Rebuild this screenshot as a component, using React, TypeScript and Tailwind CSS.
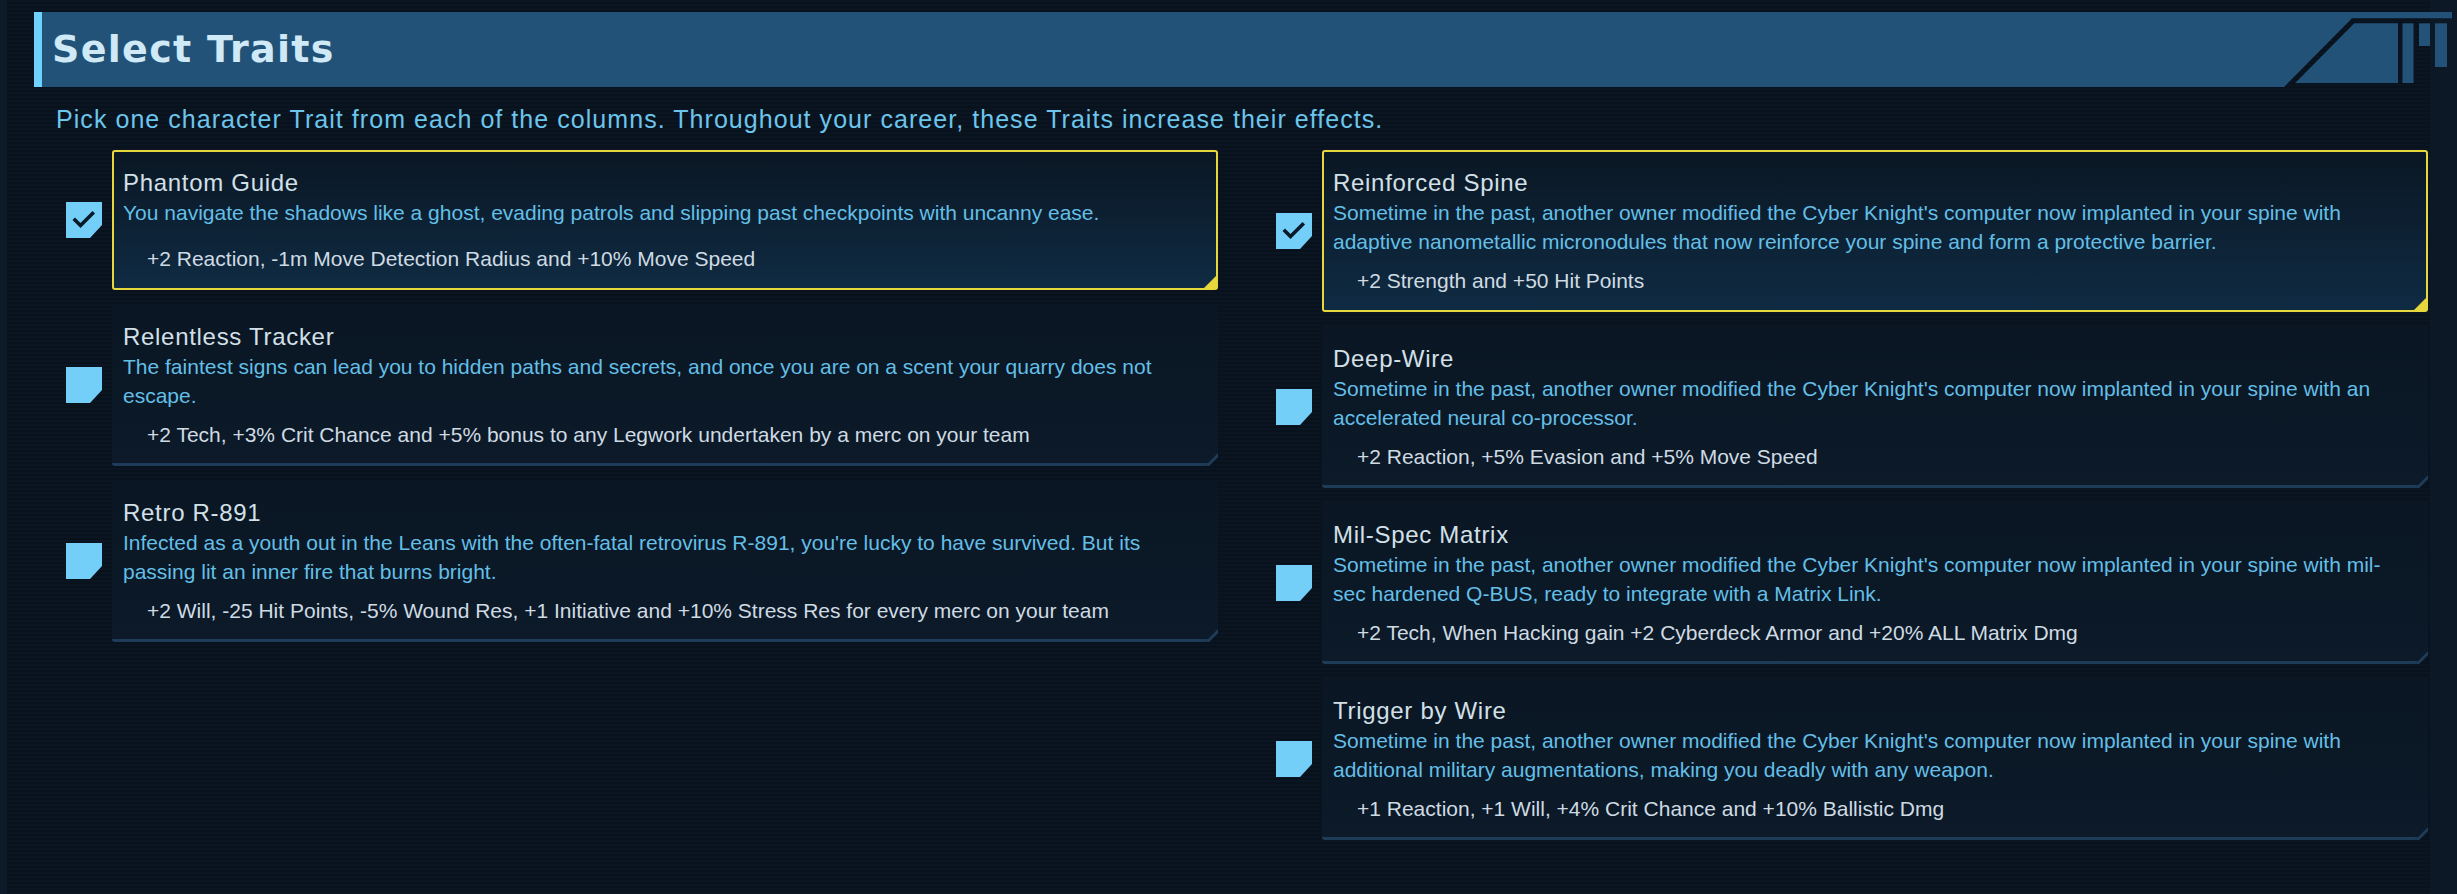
import React from "react";

type Trait = { name: string; desc: string[]; effect: string; selected?: boolean };

const leftTraits: Trait[] = [
  {
    name: "Phantom Guide",
    desc: ["You navigate the shadows like a ghost, evading patrols and slipping past checkpoints with uncanny ease."],
    effect: "+2 Reaction, -1m Move Detection Radius and +10% Move Speed",
    selected: true,
  },
  {
    name: "Relentless Tracker",
    desc: [
      "The faintest signs can lead you to hidden paths and secrets, and once you are on a scent your quarry does not",
      "escape.",
    ],
    effect: "+2 Tech, +3% Crit Chance and +5% bonus to any Legwork undertaken by a merc on your team",
  },
  {
    name: "Retro R-891",
    desc: [
      "Infected as a youth out in the Leans with the often-fatal retrovirus R-891, you're lucky to have survived. But its",
      "passing lit an inner fire that burns bright.",
    ],
    effect: "+2 Will, -25 Hit Points, -5% Wound Res, +1 Initiative and +10% Stress Res for every merc on your team",
  },
];

const rightTraits: Trait[] = [
  {
    name: "Reinforced Spine",
    desc: [
      "Sometime in the past, another owner modified the Cyber Knight's computer now implanted in your spine with",
      "adaptive nanometallic micronodules that now reinforce your spine and form a protective barrier.",
    ],
    effect: "+2 Strength and +50 Hit Points",
    selected: true,
  },
  {
    name: "Deep-Wire",
    desc: [
      "Sometime in the past, another owner modified the Cyber Knight's computer now implanted in your spine with an",
      "accelerated neural co-processor.",
    ],
    effect: "+2 Reaction, +5% Evasion and +5% Move Speed",
  },
  {
    name: "Mil-Spec Matrix",
    desc: [
      "Sometime in the past, another owner modified the Cyber Knight's computer now implanted in your spine with mil-",
      "sec hardened Q-BUS, ready to integrate with a Matrix Link.",
    ],
    effect: "+2 Tech, When Hacking gain +2 Cyberdeck Armor and +20% ALL Matrix Dmg",
  },
  {
    name: "Trigger by Wire",
    desc: [
      "Sometime in the past, another owner modified the Cyber Knight's computer now implanted in your spine with",
      "additional military augmentations, making you deadly with any weapon.",
    ],
    effect: "+1 Reaction, +1 Will, +4% Crit Chance and +10% Ballistic Dmg",
  },
];

function Checkbox({ checked }: { checked?: boolean }) {
  return (
    <svg width="36" height="36" viewBox="0 0 36 36" className="shrink-0">
      <polygon points="0,0 36,0 36,23 24,36 0,36" fill="#73cff8" />
      {checked && (
        <polyline
          points="9,18 14.5,23.5 26.5,11.5"
          fill="none"
          stroke="#0b1a2a"
          strokeWidth="3.6"
          strokeLinecap="square"
        />
      )}
    </svg>
  );
}

function CardBody({ t }: { t: Trait }) {
  return (
    <>
      <div className="text-[24px] leading-[30px] tracking-[0.7px] text-[#d3e0e8] whitespace-nowrap">{t.name}</div>
      <div className="text-[21px] leading-[29px] text-[#63bfe6]">
        {t.desc.map((l) => (
          <div key={l} className="whitespace-nowrap">
            {l}
          </div>
        ))}
      </div>
      <div className="mt-auto pt-[10px] pl-6 text-[21px] leading-[29px] text-[#cfdbe3] whitespace-nowrap">
        {t.effect}
      </div>
    </>
  );
}

function Card({ t }: { t: Trait }) {
  if (t.selected) {
    return (
      <div className="relative flex-1">
        <div className="flex min-h-[140px] flex-col rounded-[3px] border-2 border-[#e6d73c] bg-linear-to-b from-[#0a1724] to-[#0f2b43] pt-[16px] pb-[15px] pl-[9px]">
          <CardBody t={t} />
        </div>
        <svg className="absolute right-[2px] bottom-[2px]" width="12" height="12" viewBox="0 0 12 12">
          <polygon points="12,0 12,12 0,12" fill="#e6d73c" />
        </svg>
      </div>
    );
  }
  return (
    <div className="relative flex-1">
      <div className="flex min-h-[140px] flex-col rounded-bl-[3px] border-b-[3px] border-[#1e3c58] bg-linear-to-b from-[#0a1623] to-[#0c1a29] pt-[18px] pb-[14px] pl-[11px] [clip-path:polygon(0_0,100%_0,100%_calc(100%_-_13px),calc(100%_-_13px)_100%,0_100%)]">
        <CardBody t={t} />
      </div>
      <svg className="absolute right-0 bottom-0" width="14" height="14" viewBox="0 0 14 14">
        <polygon points="1,14 14,1 14,5.2 5.2,14" fill="#1e3c58" />
      </svg>
    </div>
  );
}

function Column({ traits }: { traits: Trait[] }) {
  return (
    <div className="flex w-[1152px] flex-col gap-[14px]">
      {traits.map((t) => (
        <div key={t.name} className="flex items-center gap-[10px]">
          <Checkbox checked={t.selected} />
          <Card t={t} />
        </div>
      ))}
    </div>
  );
}

export default function App() {
  return (
    <div className="h-[894px] w-full overflow-hidden bg-[linear-gradient(90deg,#0d1b28_0px,#0d1b28_7px,transparent_7px,transparent_2430px,#0c1825_2430px),repeating-linear-gradient(180deg,#0a1521_0px,#0a1521_2px,#08121c_2px,#08121c_4px)] pt-[12px] font-['Liberation_Sans',Arial,sans-serif]">
      <div className="ml-[34px] mr-[5px] flex h-[75px]">
        <div className="w-[8px] bg-[#6fd1fd]" />
        <div className="flex flex-1 items-center bg-[#225277] pl-[10px]">
          <span className="font-['DejaVu_Sans',sans-serif] text-[38px] font-bold tracking-[1.3px] text-[#cfe9f7]">
            Select Traits
          </span>
        </div>
        <svg width="168" height="75" viewBox="0 0 168 75" className="shrink-0">
          <polygon points="0,0 168,0 168,6.3 68,6.3 0,75" fill="#225277" />
          <polygon points="11.2,71 70.3,11.3 114,11.3 114,71" fill="#225277" />
          <rect x="118.5" y="11.3" width="11" height="59.7" fill="#225277" />
          <rect x="135" y="11.3" width="11" height="22.7" fill="#225277" />
          <rect x="151" y="11.3" width="12" height="43.7" fill="#225277" />
        </svg>
      </div>
      <div className="mt-[17px] pl-[56px] text-[25px] leading-[30px] tracking-[1.05px] text-[#6cc5ec] whitespace-nowrap">
        Pick one character Trait from each of the columns. Throughout your career, these Traits increase their effects.
      </div>
      <div className="mt-[16px] ml-[66px] flex items-start gap-[58px]">
        <Column traits={leftTraits} />
        <Column traits={rightTraits} />
      </div>
    </div>
  );
}
